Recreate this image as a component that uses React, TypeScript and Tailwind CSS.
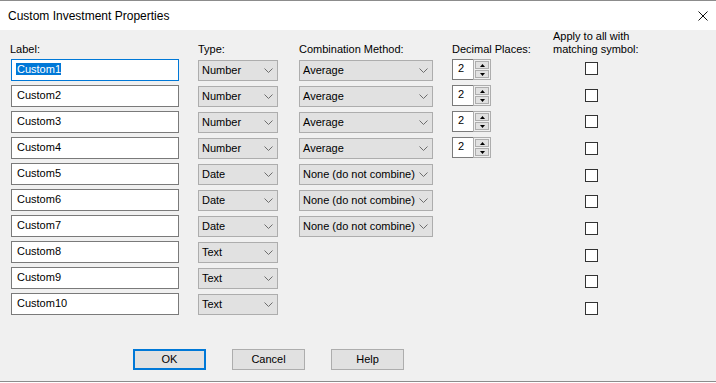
import React from "react";

const rows = [
  { label: "Custom1", type: "Number", comb: "Average", dec: true },
  { label: "Custom2", type: "Number", comb: "Average", dec: true },
  { label: "Custom3", type: "Number", comb: "Average", dec: true },
  { label: "Custom4", type: "Number", comb: "Average", dec: true },
  { label: "Custom5", type: "Date", comb: "None (do not combine)", dec: false },
  { label: "Custom6", type: "Date", comb: "None (do not combine)", dec: false },
  { label: "Custom7", type: "Date", comb: "None (do not combine)", dec: false },
  { label: "Custom8", type: "Text", comb: null, dec: false },
  { label: "Custom9", type: "Text", comb: null, dec: false },
  { label: "Custom10", type: "Text", comb: null, dec: false },
];

function Chevron() {
  return (
    <svg width="9" height="5" viewBox="0 0 9 5" className="shrink-0">
      <path d="M0.5 0.5 L4.5 4.5 L8.5 0.5" fill="none" stroke="#6d6d6d" strokeWidth="1" />
    </svg>
  );
}

function Select({ text, w }: { text: string; w: string }) {
  return (
    <div
      className={`${w} h-[21px] flex items-center justify-between bg-[#e1e1e1] border border-[#adadad] pl-[3px] pr-[4px]`}
    >
      <span className="leading-[13px] whitespace-nowrap">{text}</span>
      <Chevron />
    </div>
  );
}

function Spin() {
  return (
    <div className="flex h-[21px] w-[39px]">
      <div className="w-[21px] h-full bg-white border border-r-0 border-[#7a7a7a] pl-[5px] pt-[2px] leading-[13px]">
        2
      </div>
      <div className="w-[18px] h-full border border-[#adadad] bg-[#f0f0f0] p-[1px] flex flex-col gap-[1px]">
        <div className="flex-1 bg-[#e1e1e1] border border-[#adadad] flex items-center justify-center">
          <svg width="5" height="3" viewBox="0 0 5 3">
            <polygon points="0,3 2.5,0 5,3" fill="#000" />
          </svg>
        </div>
        <div className="flex-1 bg-[#e1e1e1] border border-[#adadad] flex items-center justify-center">
          <svg width="5" height="3" viewBox="0 0 5 3">
            <polygon points="0,0 2.5,3 5,0" fill="#000" />
          </svg>
        </div>
      </div>
    </div>
  );
}

function Header({ children, cls = "" }: { children: React.ReactNode; cls?: string }) {
  return (
    <div className={`h-[29px] flex flex-col justify-end pb-[3px] leading-[13px] whitespace-nowrap ${cls}`}>
      {children}
    </div>
  );
}

export default function App() {
  return (
    <div
      className="w-[716px] h-[382px] flex flex-col bg-[#f0f0f0] border-t border-b border-[#8c8c8c] text-[11px] text-black"
      style={{ fontFamily: '"Liberation Sans", Arial, sans-serif' }}
    >
      <div className="h-[29px] bg-white flex items-center justify-between pl-[8px] pr-[8px]">
        <span className="text-[12px] leading-[14px]">Custom Investment Properties</span>
        <svg width="10" height="10" viewBox="0 0 10 10">
          <path d="M0.5 0.5 L9.5 9.5 M9.5 0.5 L0.5 9.5" stroke="#111" strokeWidth="1" />
        </svg>
      </div>

      <div className="flex flex-col">
        <div className="flex">
          {/* Label column */}
          <div className="ml-[11px] w-[168px] flex flex-col">
            <Header cls="-ml-px">Label:</Header>
            <div className="flex flex-col gap-[4px]">
              {rows.map((r, i) => (
                <div
                  key={r.label}
                  className={`h-[22px] bg-white border ${
                    i === 0 ? "border-[#0078d7]" : "border-[#7a7a7a]"
                  } pl-[5px] pt-[3px] leading-[13px]`}
                >
                  {i === 0 ? (
                    <span className="bg-[#0078d7] text-white -ml-px pl-px">{r.label}</span>
                  ) : (
                    r.label
                  )}
                </div>
              ))}
            </div>
          </div>

          {/* Type column */}
          <div className="ml-[19px] w-[80px] flex flex-col">
            <Header>Type:</Header>
            <div className="flex flex-col gap-[5px] pt-[1px]">
              {rows.map((r) => (
                <Select key={r.label} text={r.type} w="w-[80px]" />
              ))}
            </div>
          </div>

          {/* Combination column */}
          <div className="ml-[21px] w-[134px] flex flex-col">
            <Header>Combination Method:</Header>
            <div className="flex flex-col gap-[5px] pt-[1px]">
              {rows
                .filter((r) => r.comb)
                .map((r) => (
                  <Select key={r.label} text={r.comb as string} w="w-[134px]" />
                ))}
            </div>
          </div>

          {/* Decimal places column */}
          <div className="ml-[19px] w-[39px] flex flex-col">
            <Header>Decimal Places:</Header>
            <div className="flex flex-col gap-[5px]">
              {rows
                .filter((r) => r.dec)
                .map((r) => (
                  <Spin key={r.label} />
                ))}
            </div>
          </div>

          {/* Apply column */}
          <div className="ml-[62px] flex flex-col">
            <Header>
              <span>Apply to all with</span>
              <span>matching symbol:</span>
            </Header>
            <div className="flex flex-col gap-[13.67px] pt-[3px] pl-[32px]">
              {rows.map((r) => (
                <div key={r.label} className="w-[13px] h-[13px] bg-white border border-[#333333]" />
              ))}
            </div>
          </div>
        </div>

        {/* Buttons */}
        <div className="flex gap-[26px] pl-[133px] mt-[34px]">
          <div className="w-[73px] h-[21px] flex items-center justify-center bg-[#e1e1e1] border-2 border-[#0078d7] leading-[13px]">
            OK
          </div>
          <div className="w-[73px] h-[21px] flex items-center justify-center bg-[#e1e1e1] border border-[#adadad] leading-[13px]">
            Cancel
          </div>
          <div className="w-[73px] h-[21px] flex items-center justify-center bg-[#e1e1e1] border border-[#adadad] leading-[13px]">
            Help
          </div>
        </div>
      </div>
    </div>
  );
}
